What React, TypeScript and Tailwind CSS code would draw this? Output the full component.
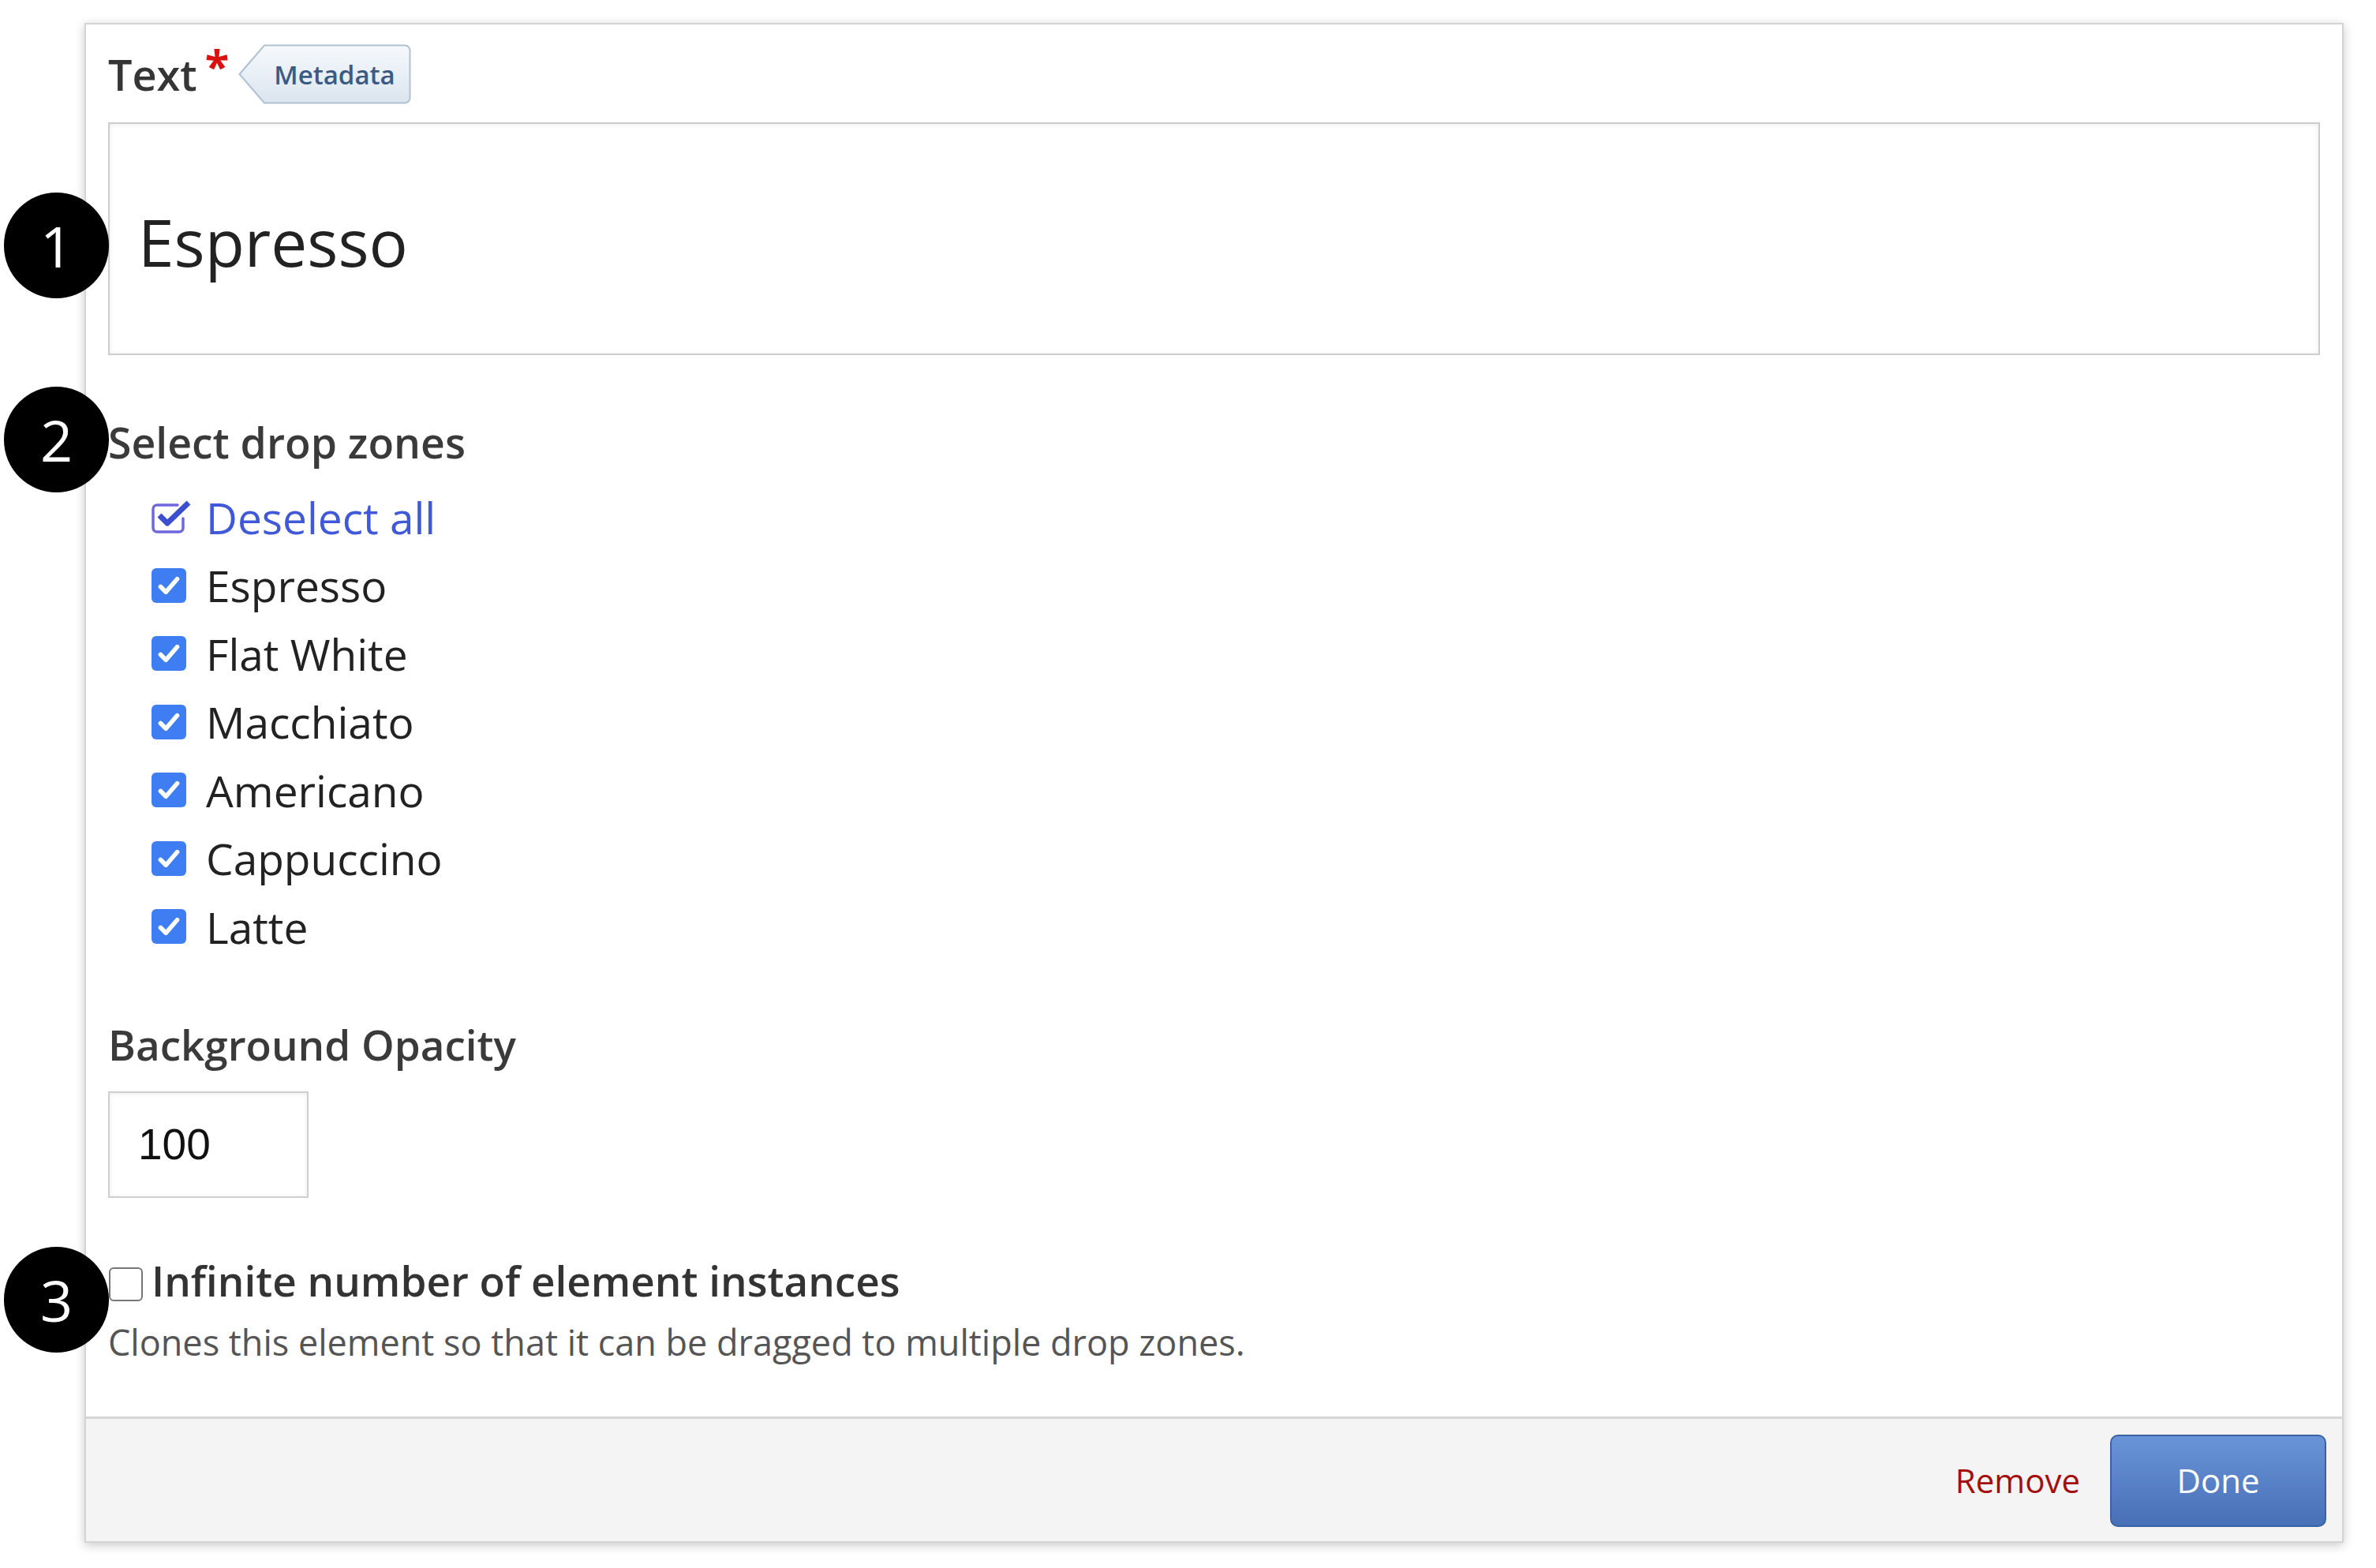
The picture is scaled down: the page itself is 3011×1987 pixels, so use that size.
import * as React from "react";

const zones = ["Espresso", "Flat White", "Macchiato", "Americano", "Cappuccino", "Latte"];

function CheckedBox() {
  return (
    <span className="flex h-[44px] w-[44px] shrink-0 items-center justify-center rounded-[6px] bg-[#3f7df3]">
      <svg viewBox="0 0 24 24" className="h-[36px] w-[36px]" fill="none" stroke="white" strokeWidth="3.8" strokeLinecap="round" strokeLinejoin="round">
        <path d="M5 13l4.5 4.5L19 6.5" />
      </svg>
    </span>
  );
}

function DeselectIcon() {
  return (
    <svg viewBox="0 0 52 46" className="h-[46px] w-[52px] shrink-0">
      <path
        d="M40 25v12a5 5 0 0 1-5 5H7a5 5 0 0 1-5-5V13a5 5 0 0 1 5-5h26"
        fill="none"
        stroke="#6f67dc"
        strokeWidth="3.5"
        strokeLinecap="round"
      />
      <path d="M10 21l10 10L47 5" fill="none" stroke="#3b4fcf" strokeWidth="7" strokeLinejoin="round" />
    </svg>
  );
}

function MetadataTag() {
  return (
    <span className="relative ml-[12px] flex h-[76px] w-[219px] items-center pl-[45px]">
      <svg viewBox="0 0 219 76" className="absolute inset-0 h-[76px] w-[219px]">
        <defs>
          <linearGradient id="tagfill" x1="0" y1="0" x2="0" y2="1">
            <stop offset="0" stopColor="#f6f9fc" />
            <stop offset="1" stopColor="#dbe5ef" />
          </linearGradient>
        </defs>
        <path
          d="M1.5 38L33 1.5h178a6.5 6.5 0 0 1 6.5 6.5v60a6.5 6.5 0 0 1-6.5 6.5H33z"
          fill="url(#tagfill)"
          stroke="#afc1d3"
          strokeWidth="2"
        />
      </svg>
      <span className="relative text-[33px] font-semibold leading-none text-[#3b5a84]">Metadata</span>
    </span>
  );
}

function Badge({ n, className }: { n: string; className: string }) {
  return (
    <div
      className={
        "absolute left-[5px] flex h-[134px] w-[133px] items-center justify-center rounded-full bg-black text-[72px] leading-none text-white " +
        className
      }
    >
      {n}
    </div>
  );
}

export default function App() {
  return (
    <div className="relative h-[1987px] w-full overflow-hidden bg-white font-['Open_Sans',sans-serif]">
      <div className="ml-[107px] w-[2863px] pt-[29px]">
        <div className="border-2 border-[#d4d4d4] bg-white shadow-[0_3px_12px_rgba(0,0,0,0.22)]">
          <div className="px-[28px] pb-[64px] pt-[25px]">
            {/* Text field */}
            <div className="flex h-[76px] items-center">
              <span className="text-[54px] font-semibold leading-[76px] text-[#353535]">Text</span>
              <span className="relative -top-[12px] ml-[10px] text-[56px] font-bold leading-none text-[#d9120f]">*</span>
              <MetadataTag />
            </div>
            <div className="mt-[23px] flex h-[295px] items-center border-2 border-[#cdcdcd] bg-white pl-[36px] pt-[6px] shadow-[inset_0_1px_6px_rgba(0,0,0,0.08)]">
              <span className="text-[82px] leading-none text-[#222222]">Espresso</span>
            </div>

            {/* Drop zones */}
            <div className="mt-[70px] text-[53.5px] font-semibold leading-[81px] text-[#3a3a3a]">Select drop zones</div>
            <div className="mt-[11px] pl-[55px]">
              <div className="flex h-[86.5px] items-center">
                <DeselectIcon />
                <span className="ml-[17px] text-[55px] leading-none text-[#4059d8]">Deselect all</span>
              </div>
              {zones.map((z) => (
                <div key={z} className="flex h-[86.5px] items-center">
                  <CheckedBox />
                  <span className="ml-[25px] text-[55px] leading-none text-[#222222]">{z}</span>
                </div>
              ))}
            </div>

            {/* Opacity */}
            <div className="mt-[65.5px] text-[53px] font-semibold leading-[81px] text-[#3a3a3a]">Background Opacity</div>
            <div className="mt-[18.5px] flex h-[135px] w-[254px] items-center border-2 border-[#cfcfcf] bg-white pl-[36px] shadow-[inset_0_1px_6px_rgba(0,0,0,0.08)]">
              <span className="font-['Liberation_Sans',Arial,sans-serif] text-[55px] leading-none text-[#111111]">100</span>
            </div>

            {/* Infinite instances */}
            <div className="mt-[69px] flex h-[72px] items-center">
              <span className="ml-[1px] mt-[10px] h-[43px] w-[43px] shrink-0 rounded-[6px] border-[2.5px] border-[#767676] bg-white" />
              <span className="ml-[11px] text-[53px] font-semibold leading-[72px] text-[#333333]">
                Infinite number of element instances
              </span>
            </div>
            <div className="mt-[12px] text-[45px] leading-[60px] text-[#555555]">
              Clones this element so that it can be dragged to multiple drop zones.
            </div>
          </div>

          {/* Footer */}
          <div className="flex items-center justify-end border-t-[3px] border-[#d6d6d6] bg-[#f4f4f4] pb-[18px] pr-[20px] pt-[20px]">
            <span className="mr-[38px] text-[42px] leading-none text-[#a30f0f]">Remove</span>
            <button className="flex h-[117px] w-[274px] items-center justify-center rounded-[10px] border-2 border-[#3b61a6] bg-linear-to-b from-[#6a94d8] to-[#4770b6] text-[42px] leading-none text-white">
              Done
            </button>
          </div>
        </div>
      </div>

      <Badge n="1" className="top-[244px]" />
      <Badge n="2" className="top-[490px]" />
      <Badge n="3" className="top-[1580px]" />
    </div>
  );
}
